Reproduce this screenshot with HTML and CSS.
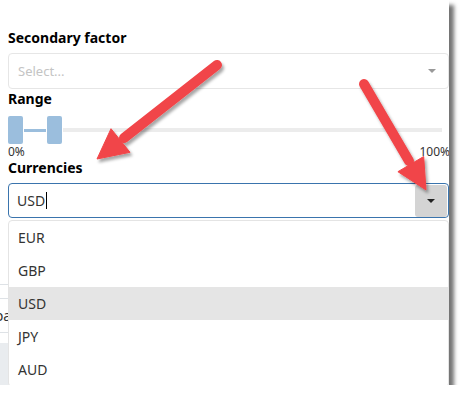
FILE: index.html
```html
<!DOCTYPE html>
<html lang="en">

<head>
    <meta charset="UTF-8">
    <meta name="viewport" content="width=device-width, initial-scale=1.0">
    <title>Currencies</title>
    <link rel="stylesheet" href="styles.css">
</head>

<body>
    <div class="shot">
        <div class="form">
            <div class="field-label">Secondary factor</div>
            <div class="select">
                <span class="placeholder">Select...</span>
                <span class="caret"></span>
            </div>

            <div class="field-label">Range</div>
            <div class="slider">
                <span class="handle"></span>
                <span class="range-fill"></span>
                <span class="handle"></span>
                <span class="track"></span>
            </div>
            <div class="scale">
                <span>0%</span>
                <span>100%</span>
            </div>

            <div class="field-label">Currencies</div>
            <div class="combo">
                <div class="input">
                    <div class="value">USD<span class="text-caret"></span></div>
                    <div class="toggle"><span class="caret dark"></span></div>
                </div>
                <ul class="menu">
                    <li class="option">EUR</li>
                    <li class="option">GBP</li>
                    <li class="option active">USD</li>
                    <li class="option">JPY</li>
                    <li class="option">AUD</li>
                </ul>
            </div>

            <!-- page content that sits under the open menu -->
            <div class="underlay">
                <div class="row"></div>
                <div class="row tall">Spa</div>
                <div class="band"></div>
            </div>
        </div>
    </div>

    <svg class="arrows" width="464" height="402" viewBox="0 0 464 402">
        <defs>
            <filter id="shadow" x="-20%" y="-20%" width="140%" height="140%">
                <feDropShadow dx="2" dy="3" stdDeviation="1.6" flood-color="#000" flood-opacity="0.35" />
            </filter>
        </defs>
        <g filter="url(#shadow)" fill="#f14548" stroke="#f14548">
            <line x1="217" y1="65" x2="124" y2="138" stroke-width="10" stroke-linecap="round" />
            <polygon points="97,159 111,128.7 130,152.3" stroke-width="1" stroke-linejoin="round" />
            <line x1="364" y1="84" x2="409" y2="161" stroke-width="10" stroke-linecap="round" />
            <polygon points="426,190 397.9,171.7 423.7,156.5" stroke-width="1" stroke-linejoin="round" />
        </g>
    </svg>
</body>

</html>
```

FILE: styles.css
```css
* {
    margin: 0;
    padding: 0;
    box-sizing: border-box;
}

body {
    position: relative;
    background: #fff;
    font-family: "Noto Sans", "Liberation Sans", sans-serif;
    color: #333;
}

.shot {
    position: relative;
    width: 449px;
    height: 385px;
    overflow: hidden;
    background: #fff;
    box-shadow: 5px 5px 4px rgba(0, 0, 0, 0.55);
}

.form {
    padding: 28px 0 0 8px;
}

.field-label {
    font-size: 14px;
    font-weight: 700;
    line-height: 20px;
    color: #000;
}

.select {
    display: flex;
    align-items: center;
    justify-content: space-between;
    height: 36px;
    margin-top: 5px;
    padding: 0 12px 0 9px;
    border: 1px solid #e6e6e6;
    border-radius: 4px;
}

.placeholder {
    font-size: 13px;
    color: #c4c4c4;
}

.caret {
    width: 0;
    height: 0;
    border-left: 4px solid transparent;
    border-right: 4px solid transparent;
    border-top: 4px solid #999;
}

.caret.dark {
    border-top-color: #222;
}

/* range slider */
.slider {
    display: flex;
    align-items: center;
    height: 28px;
    margin-top: 7px;
}

.handle {
    width: 15px;
    height: 28px;
    background: #9bbedd;
    border-radius: 2px;
}

.range-fill {
    width: 22px;
    height: 3px;
    margin: 0 1px;
    background: #9bbedd;
}

.track {
    flex: 1;
    height: 4px;
    margin: 0 7px 0 1px;
    background: #ececec;
}

.scale {
    display: flex;
    justify-content: space-between;
    margin-top: 2px;
    margin-right: -1px;
    font-size: 12px;
    line-height: 12px;
    color: #333;
}

/* currencies combo */
.combo {
    position: relative;
    margin-top: 5px;
}

.input {
    display: flex;
    align-items: center;
    height: 35px;
    padding: 0 1px 0 8px;
    border: 1px solid #3a74ad;
    border-radius: 4px;
    font-size: 14px;
    color: #333;
}

.value {
    flex: 1;
    display: flex;
    align-items: center;
}

.text-caret {
    width: 1px;
    height: 17px;
    margin-left: 1px;
    background: #000;
}

.toggle {
    display: flex;
    align-items: center;
    justify-content: center;
    width: 32px;
    height: 32px;
    background: #d4d4d4;
    border-radius: 3px;
}

.menu {
    position: absolute;
    top: calc(100% + 2px);
    left: 0;
    right: 0;
    z-index: 2;
    list-style: none;
    background: #fff;
    border: 1px solid #e4e4e4;
    border-radius: 4px;
}

.option {
    height: 33px;
    line-height: 33px;
    padding-left: 9px;
    font-size: 14px;
    color: #333;
}

.option.active {
    background: #e5e5e5;
}

.underlay {
    margin: 66px 0 0 -8px;
    border-top: 1px solid #dee2e6;
}

.row {
    height: 14px;
    border-bottom: 1px solid #dee2e6;
}

.row.tall {
    height: 34px;
    line-height: 33px;
    font-size: 14px;
    text-indent: -13px;
}

.band {
    height: 42px;
    margin-top: 10px;
    background: #e9ecef;
}

.arrows {
    position: absolute;
    top: 0;
    left: 0;
    pointer-events: none;
}
```
